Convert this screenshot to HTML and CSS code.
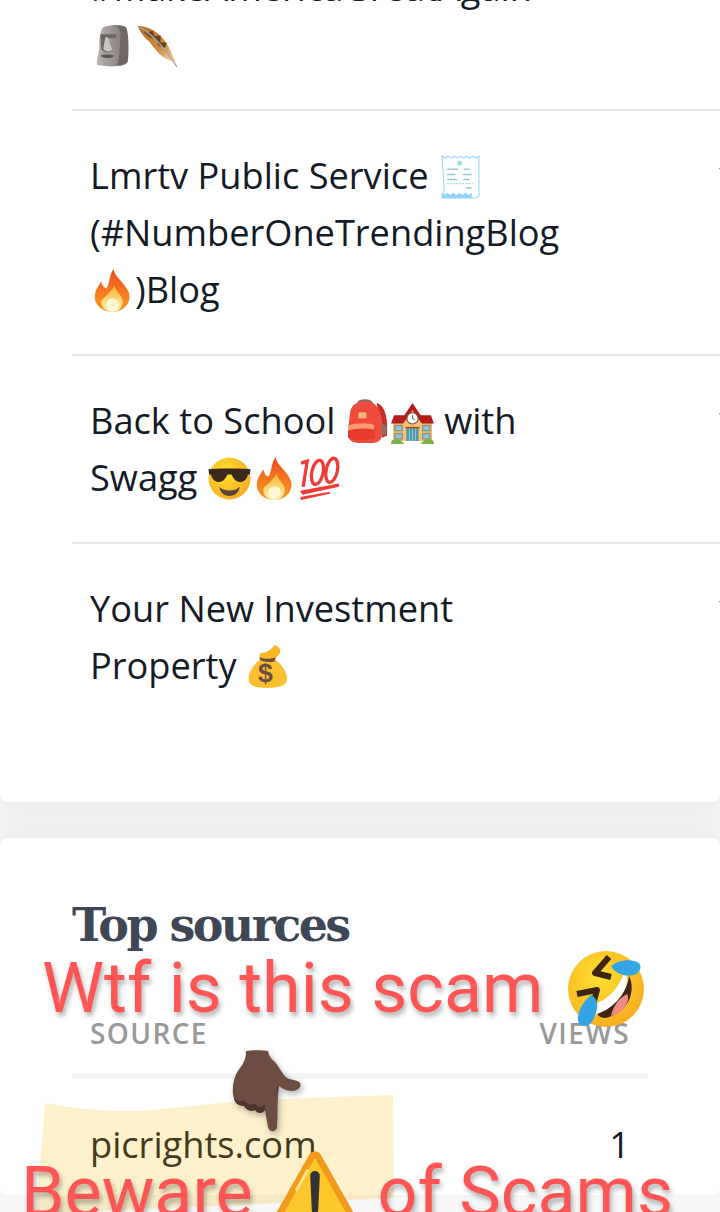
FILE: index.html
```html
<!DOCTYPE html>
<html lang="en">
<head>
<meta charset="utf-8">
<title>Top sources</title>
<link rel="stylesheet" href="styles.css">
</head>
<body>
<svg class="defs" width="0" height="0" aria-hidden="true">
  <defs>
    <linearGradient id="gFire" x1="0" y1="0" x2="0" y2="1"><stop offset="0" stop-color="#ef4a24"/><stop offset=".55" stop-color="#f57c1f"/><stop offset="1" stop-color="#fb9a1c"/></linearGradient>
    <linearGradient id="gFireIn" x1="0" y1="0" x2="0" y2="1"><stop offset="0" stop-color="#fdb52e"/><stop offset="1" stop-color="#fff3b8"/></linearGradient>
    <linearGradient id="gMoai" x1="0" y1="0" x2="1" y2="0"><stop offset="0" stop-color="#b9b3b2"/><stop offset="1" stop-color="#8a8280"/></linearGradient>
    <linearGradient id="gFeather" x1="0" y1="0" x2="1" y2="1"><stop offset="0" stop-color="#b56a1e"/><stop offset=".6" stop-color="#d08b38"/><stop offset="1" stop-color="#f7dfb9"/></linearGradient>
    <radialGradient id="gFace" cx=".4" cy=".35" r=".75"><stop offset="0" stop-color="#fde030"/><stop offset="1" stop-color="#f7a81e"/></radialGradient>
    <symbol id="moai" viewBox="0 0 44 44">
      <path d="M13 6C15 2 31 1 35 4C38 7 38 30 37 37C36 41 31 42 26 42L10 40Z" fill="#6f6766"/>
      <path d="M12 5C15 2 24 2 27 4C31 6 30 16 29 24C29 32 28 38 26 42C21 43 13 42 7 41C6 36 9 30 9 24C9 16 10 9 12 5Z" fill="url(#gMoai)"/>
      <path d="M10 11H26L25 15H18L17 25L22 27L16 29L11 26Z" fill="#6e6665"/>
      <path d="M15 14C18 13 19 16 19 20L22 26C19 29 14 28 13 25Z" fill="#c9c4c3"/>
      <path d="M10 32C14 30 20 31 24 32C20 35 14 35 10 32Z" fill="#5e5655"/>
    </symbol>
    <symbol id="feather" viewBox="0 0 44 44">
      <path d="M3 3C13 3 24 9 31 20C35 27 38 34 40 38C34 37 27 34 22 28C19 25 16 21 14 18L11 16C8 12 4 8 3 3Z" fill="url(#gFeather)"/>
      <path d="M8 5L12 10L17 7L19 13L25 12L25 19L31 19L29 25L23 22L20 16L14 14L9 9Z" fill="#6b3f26"/>
      <path d="M5 4C16 11 30 25 41 43" stroke="#a8a8a8" stroke-width="1.4" fill="none"/>
    </symbol>
    <symbol id="receipt" viewBox="0 0 44 44">
      <path d="M4 2L7 4L10 2L13 4L16 2L19 4L22 2L25 4L28 2L31 4L34 2L37 4L40 2V41L37 43H4C6 41 6 38 6 35Z" fill="#fff" stroke="#8fd4f5" stroke-width="1"/>
      <path d="M3 38L6 40L9 38L12 40L15 38L18 40L21 38L24 40L27 38L30 40L33 38V43H4Z" fill="#8fd4f5"/>
      <circle cx="21" cy="9" r="2.4" fill="#9fd8e6"/>
      <path d="M9 15H20M25 15H31M9 20H17M24 20H33M9 25H19M25 25H31M27 33H33" stroke="#9cc9d8" stroke-width="1.5"/>
      <path d="M9 29H34" stroke="#9cc9d8" stroke-width="1.3" stroke-dasharray="1.5 1.5"/>
    </symbol>
    <symbol id="fire" viewBox="0 0 44 44">
      <path d="M23 1C24 9 34 14 38 24C41 34 33 43 22 43C11 43 3 35 5 25C6 20 9 17 11 13C12 17 13 19 16 20C20 14 18 8 23 1Z" fill="url(#gFire)"/>
      <path d="M24 17C25 24 33 27 32 34C31 40 27 43 22 43C16 43 11 39 11 33C12 29 15 29 17 26C19 24 22 21 24 17Z" fill="url(#gFireIn)"/>
      <ellipse cx="22" cy="36" rx="6" ry="6.5" fill="#fff6d6"/>
    </symbol>
    <symbol id="backpack" viewBox="0 0 44 44">
      <path d="M31 4C40 7 42 20 41 36L36 38Z" fill="#c62f2a"/>
      <path d="M13 4C15 1 24 1 26 4" stroke="#78706c" stroke-width="3" fill="none"/>
      <path d="M5 13C6 5 14 2 20 2C28 2 33 8 35 15C37 24 37 34 35 39C33 43 28 43 20 43C12 43 7 43 4 39C3 32 4 20 5 13Z" fill="#ef4b3c"/>
      <rect x="13" y="13" width="8" height="6" rx="1.500" fill="#fdb57a"/>
      <path d="M3 26C10 23 26 23 29 26L29 38C24 41 10 41 3 38Z" fill="#e8392f"/>
      <path d="M3 26C10 23 26 23 29 26L28 30C20 28 10 29 3 31Z" fill="#fa9a70"/>
      <path d="M36 24L41 26L40 35L36 36Z" fill="#8d6e63"/>
    </symbol>
    <symbol id="school" viewBox="0 0 44 44">
      <rect x="3" y="19" width="38" height="22" fill="#f4b560"/>
      <path d="M1 24L4 16H14L22 4L30 16H40L43 24H31L22 14L13 24Z" fill="#b71c1c"/>
      <path d="M13 24L22 11L31 24V41H13Z" fill="#f8c471"/>
      <circle cx="22" cy="19" r="5.500" fill="#fff" stroke="#6d4c41" stroke-width="1"/>
      <path d="M22 16V19L24 20" stroke="#444" stroke-width=".9" fill="none"/>
      <rect x="16" y="28" width="12" height="13" fill="#4f9aa8"/>
      <path d="M22 28V41M19 28V41M25 28V41" stroke="#a5d4dc" stroke-width=".8"/>
      <path d="M15 28H29" stroke="#b2452e" stroke-width="1.500"/>
      <rect x="5" y="26" width="7" height="5" fill="#8fc7d6" stroke="#6d8f96"/>
      <rect x="32" y="26" width="7" height="5" fill="#8fc7d6" stroke="#6d8f96"/>
      <rect x="5" y="34" width="7" height="5" fill="#8fc7d6" stroke="#6d8f96"/>
      <rect x="32" y="34" width="7" height="5" fill="#8fc7d6" stroke="#6d8f96"/>
      <path d="M1 44C1 39 6 39 10 40C11 41 13 42 14 44ZM43 44C43 39 38 39 34 40C33 41 31 42 30 44Z" fill="#7cb342"/>
    </symbol>
    <symbol id="cool" viewBox="0 0 44 44">
      <circle cx="22" cy="22" r="20.500" fill="url(#gFace)"/>
      <path d="M1.500 13C8 12 36 12 42.500 13L42 18H40C39 25 32 27 28 24C26 22 25 20 24 18H20C19 20 18 22 16 24C12 27 5 25 4 18H2Z" fill="#3a2a1c"/>
      <path d="M12 30C17 35 27 35 32 30C31 37 26 39 22 39C18 39 13 37 12 30Z" fill="#5d4037"/>
    </symbol>
    <symbol id="hundred" viewBox="0 0 44 44">
      <g fill="none" stroke="#ef3b36" stroke-width="3.200">
        <path d="M4 7L10 5L6 30"/>
        <ellipse cx="20" cy="16" rx="5.500" ry="12" transform="rotate(12 20 16)"/>
        <ellipse cx="34" cy="14" rx="5.500" ry="12" transform="rotate(12 34 14)"/>
      </g>
      <path d="M3 34L41 27L41 30L5 38Z M3 40L32 35L32 37L4 43Z" fill="#ef3b36"/>
    </symbol>
    <symbol id="money" viewBox="0 0 44 44">
      <path d="M14 15C6 21 1 30 3 37C5 42 12 43 21 43C31 43 39 41 40 36C41 28 35 20 28 15Z" fill="#fbc02d"/>
      <path d="M14 9C18 9 24 7 28 1C32 2 35 6 33 9C31 12 29 14 28 15H14C13 13 13 11 14 9Z" fill="#f9b724"/>
      <path d="M13 13C18 15 24 15 29 13L28 17C24 18 18 18 14 16Z" fill="#6d4c41"/>
      <text x="19" y="37" class="money-sign">$</text>
    </symbol>
    <symbol id="rofl" viewBox="0 0 80 80">
      <circle cx="41" cy="41" r="38" fill="url(#gFace)"/>
      <path d="M61 24C66 38 56 60 32 67L24 58C40 54 54 42 59 24Z" fill="#fff"/>
      <path d="M64 28C72 44 62 66 40 70C36 70 34 68 32 66C50 60 62 44 64 28Z" fill="#3e2411"/>
      <path d="M62 46C66 52 58 66 46 68C48 58 54 50 62 46Z" fill="#ee8b84"/>
      <path d="M44 9L30 25L46 29M12 46L32 42L27 60" stroke="#3e2411" stroke-width="6" fill="none" stroke-linejoin="round"/>
      <path d="M46 18C52 12 66 10 74 15C77 19 75 24 71 26C62 30 50 26 46 18Z" fill="#35a4e4"/>
      <path d="M26 47C36 52 32 64 28 72C24 80 14 80 13 72C12 62 20 52 26 47Z" fill="#35a4e4"/>
    </symbol>
    <symbol id="warn" viewBox="0 0 80 70">
      <path d="M40 3C43 3 45 5 47 9L77 62C79 67 77 70 73 70H7C3 70 1 67 3 62L33 9C35 5 37 3 40 3Z" fill="#f19a1c"/>
      <path d="M40 9L72 66H8Z" fill="#fcc72b"/>
      <path d="M33 21L23 39" stroke="#ffe082" stroke-width="3" stroke-linecap="round"/>
      <path d="M35.500 26C35.500 20 44.500 20 44.500 26L43 58C43 62 37 62 37 58Z" fill="#333"/>
    </symbol>
  </defs>
</svg>

<main class="page">
  <section class="card card-list">
    <div class="row">
      <div class="title">#MakeAmericaGreatAgain <svg class="emoji"><use href="#moai"/></svg><svg class="emoji"><use href="#feather"/></svg></div>
      <div class="value">1</div>
    </div>
    <div class="row">
      <div class="title">Lmrtv Public Service <svg class="emoji"><use href="#receipt"/></svg> (#NumberOneTrendingBlog <svg class="emoji"><use href="#fire"/></svg>)Blog</div>
      <div class="value">1</div>
    </div>
    <div class="row">
      <div class="title">Back to School <svg class="emoji"><use href="#backpack"/></svg><svg class="emoji"><use href="#school"/></svg> with Swagg <svg class="emoji"><use href="#cool"/></svg><svg class="emoji"><use href="#fire"/></svg><svg class="emoji"><use href="#hundred"/></svg></div>
      <div class="value">1</div>
    </div>
    <div class="row row-last">
      <div class="title">Your New Investment Property <svg class="emoji"><use href="#money"/></svg></div>
      <div class="value">1</div>
    </div>
  </section>

  <section class="card card-sources">
    <h2 class="heading">Top sources</h2>
    <div class="thead">
      <span>Source</span>
      <span>Views</span>
    </div>
    <div class="tbody">
      <span>picrights.com</span>
      <span>1</span>
    </div>
  </section>

  <svg class="highlight" viewBox="0 0 720 1212" aria-hidden="true">
    <path d="M45 1103C70 1107 90 1111 130 1111C170 1110 210 1102 260 1100C310 1098 350 1096 393 1095L394 1198C340 1200 250 1205 160 1208L36 1214Z" fill="#f5b800" fill-opacity=".2"/>
  </svg>
  <svg class="hand" viewBox="0 0 72 84" aria-hidden="true">
    <path d="M14 1C20 0 30 0 36 1C37 6 39 9 43 12C48 18 50 24 55 28C60 30 66 30 68 33C70 37 66 41 60 41C54 41 50 38 47 36C45 50 46 66 45 77C45 82 37 83 36 77C35 72 34 66 33 60C30 64 26 64 23 60C20 62 14 60 12 56C6 56 2 52 1 44C0 34 3 24 8 18C12 13 14 8 14 1Z" fill="#6d4c41"/>
    <path d="M47 36C45 37 45 38 45 42" stroke="#4e342e" stroke-width="1" fill="none"/>
    <path d="M2 48C6 52 10 52 12 50C15 55 20 56 23 53C26 58 30 58 33 54L33 60C30 64 26 64 23 60C20 62 14 60 12 56C6 56 2 52 2 48Z" fill="#4e342e"/>
  </svg>
  <p class="shout shout-top">Wtf is this scam</p>
  <svg class="rofl" viewBox="0 0 80 80" aria-hidden="true"><use href="#rofl"/></svg>
  <p class="shout shout-bottom"><span>Beware</span><span>of Scams</span></p>
  <svg class="warn" viewBox="0 0 80 70" aria-hidden="true"><use href="#warn"/></svg>
</main>
</body>
</html>
```
FILE: styles.css
```css
html, body {
  margin: 0;
  padding: 0;
  height: 1212px;
  overflow: hidden;
  background: #f7f7f7;
}

.defs {
  position: absolute;
}

.page {
  position: relative;
  height: 1212px;
  overflow: hidden;
  font-family: "Open Sans", "Liberation Sans", sans-serif;
  font-size: 36.2px;
  line-height: 57px;
  color: #141a26;
}

.card {
  background: #fff;
  border-radius: 8px;
  overflow: hidden;
}

.card-list {
  margin-top: -77px;
  padding: 0 0 72px 72px;
  box-shadow: 0 12px 24px rgba(0, 0, 0, .05);
}

.row {
  display: flex;
  width: 700px;
  border-bottom: 2px solid #e5e5e5;
}

.row-last {
  border-bottom: 0;
}

.title {
  flex: 0 0 644px;
  box-sizing: border-box;
  padding: 36px 141px 36px 18px;
}

.value {
  padding-top: 36px;
}

.emoji {
  width: 45px;
  height: 45px;
  vertical-align: -10px;
}

.money-sign {
  font-family: "Liberation Sans", sans-serif;
  font-size: 26px;
  font-weight: 700;
  fill: #6d4c41;
  text-anchor: middle;
}

.card-sources {
  margin-top: 36px;
  height: 357px;
  box-sizing: border-box;
  padding: 57px 72px 0;
  box-shadow: 0 -12px 24px rgba(0, 0, 0, .05);
}

.heading {
  margin: 0;
  font-family: "DejaVu Serif", serif;
  font-size: 46px;
  font-weight: 700;
  line-height: 60px;
  letter-spacing: -2.6px;
  color: #3f4757;
}

.thead {
  display: flex;
  justify-content: space-between;
  margin-top: 59px;
  padding: 0 18px 21px;
  border-bottom: 6px solid #f3f4f5;
  font-size: 28px;
  font-weight: 600;
  line-height: 38px;
  letter-spacing: 1.4px;
  text-transform: uppercase;
  color: #999;
}

.tbody {
  display: flex;
  justify-content: space-between;
  padding: 37px 18px 0;
}

.highlight {
  position: absolute;
  inset: 0;
  width: 720px;
  height: 1212px;
}

.hand {
  position: absolute;
  left: 232px;
  top: 1050px;
  width: 72px;
  height: 84px;
  filter: drop-shadow(2px 3px 3px rgba(0, 0, 0, .3));
}

.shout {
  position: absolute;
  margin: 0;
  font-family: Roboto, "Liberation Sans", sans-serif;
  font-size: 70px;
  line-height: 80px;
  color: #ff5555;
  text-shadow: 2px 4px 5px rgba(0, 0, 0, .3);
  white-space: nowrap;
}

.shout-top {
  left: 42px;
  top: 948px;
}

.shout-bottom {
  left: 21px;
  top: 1152px;
  display: flex;
  gap: 125px;
}

.rofl {
  position: absolute;
  left: 565px;
  top: 948px;
  width: 80px;
  height: 80px;
}

.warn {
  position: absolute;
  left: 272px;
  top: 1148px;
  width: 86px;
  height: 75px;
}
```
